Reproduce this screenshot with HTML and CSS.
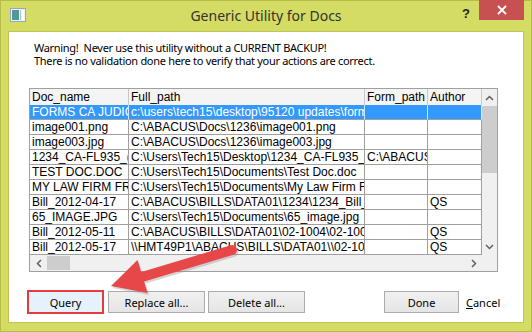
FILE: index.html
```html
<!DOCTYPE html>
<html lang="en">
<head>
    <meta charset="UTF-8">
    <title>Generic Utility for Docs</title>
    <link rel="stylesheet" href="styles.css">
</head>
<body>
    <div class="window">
        <div class="titlebar">
            <div class="title-left">
                <svg class="app-icon" width="16" height="14" viewBox="0 0 16 14">
                    <defs>
                        <linearGradient id="ig" x1="0" y1="0" x2="1" y2="1">
                            <stop offset="0" stop-color="#5a8fb0"/>
                            <stop offset="1" stop-color="#3fa77a"/>
                        </linearGradient>
                    </defs>
                    <rect x="0.5" y="0.5" width="15" height="13" fill="#eef1f6" stroke="#9ca6ba"/>
                    <rect x="2" y="2" width="7" height="10" fill="url(#ig)"/>
                    <rect x="10" y="2" width="1" height="10" fill="#b8c0cc"/>
                    <rect x="12" y="2" width="2" height="10" fill="#ffffff"/>
                </svg>
            </div>
            <div class="title">Generic Utility for Docs</div>
            <div class="title-right">
                <div class="help">?</div>
                <div class="close">
                    <svg width="10" height="10" viewBox="0 0 10 10">
                        <path d="M1 1 L9 9 M9 1 L1 9" stroke="#fff" stroke-width="1.8"/>
                    </svg>
                </div>
            </div>
        </div>

        <div class="client">
            <p class="warning">Warning!&nbsp; Never use this utility without a CURRENT BACKUP!<br>There is no validation done here to verify that your actions are correct.</p>

            <div class="grid">
                <div class="hd">Doc_name</div>
                <div class="hd">Full_path</div>
                <div class="hd">Form_path</div>
                <div class="hd">Author</div>

                <div class="vscroll">
                    <div class="sb-btn">
                        <svg width="9" height="6" viewBox="0 0 9 6"><path d="M1 5 L4.5 1.5 L8 5" fill="none" stroke="#606060" stroke-width="1.5"/></svg>
                    </div>
                    <div class="vtrack"><div class="vthumb"></div></div>
                    <div class="sb-btn">
                        <svg width="9" height="6" viewBox="0 0 9 6"><path d="M1 1 L4.5 4.5 L8 1" fill="none" stroke="#606060" stroke-width="1.5"/></svg>
                    </div>
                </div>

                <div class="cell sel">FORMS CA JUDICIAL</div>
                <div class="cell sel">c:\users\tech15\desktop\95120 updates\forms</div>
                <div class="cell sel"></div>
                <div class="cell sel"></div>

                <div class="cell">image001.png</div>
                <div class="cell">C:\ABACUS\Docs\1236\image001.png</div>
                <div class="cell"></div>
                <div class="cell"></div>

                <div class="cell">image003.jpg</div>
                <div class="cell">C:\ABACUS\Docs\1236\image003.jpg</div>
                <div class="cell"></div>
                <div class="cell"></div>

                <div class="cell">1234_CA-FL935_(2012)</div>
                <div class="cell">C:\Users\Tech15\Desktop\1234_CA-FL935_(2012)</div>
                <div class="cell">C:\ABACUS\Forms</div>
                <div class="cell"></div>

                <div class="cell">TEST DOC.DOC</div>
                <div class="cell">C:\Users\Tech15\Documents\Test Doc.doc</div>
                <div class="cell"></div>
                <div class="cell"></div>

                <div class="cell">MY LAW FIRM FRIENDS</div>
                <div class="cell">C:\Users\Tech15\Documents\My Law Firm Friends</div>
                <div class="cell"></div>
                <div class="cell"></div>

                <div class="cell">Bill_2012-04-17</div>
                <div class="cell">C:\ABACUS\BILLS\DATA01\1234\1234_Bill_2012</div>
                <div class="cell"></div>
                <div class="cell">QS</div>

                <div class="cell">65_IMAGE.JPG</div>
                <div class="cell">C:\Users\Tech15\Documents\65_image.jpg</div>
                <div class="cell"></div>
                <div class="cell"></div>

                <div class="cell">Bill_2012-05-11</div>
                <div class="cell">C:\ABACUS\BILLS\DATA01\02-1004\02-1004</div>
                <div class="cell"></div>
                <div class="cell">QS</div>

                <div class="cell">Bill_2012-05-17</div>
                <div class="cell">\\HMT49P1\ABACUS\BILLS\DATA01\\02-1004</div>
                <div class="cell"></div>
                <div class="cell">QS</div>

                <div class="hscroll">
                    <div class="sb-btn">
                        <svg width="6" height="9" viewBox="0 0 6 9"><path d="M5 1 L1.5 4.5 L5 8" fill="none" stroke="#606060" stroke-width="1.5"/></svg>
                    </div>
                    <div class="htrack"><div class="hthumb"></div></div>
                    <div class="sb-btn">
                        <svg width="6" height="9" viewBox="0 0 6 9"><path d="M1 1 L4.5 4.5 L1 8" fill="none" stroke="#606060" stroke-width="1.5"/></svg>
                    </div>
                </div>
                <div class="corner"></div>
            </div>

            <div class="actions">
                <button class="btn btn-query">Query</button>
                <button class="btn btn-wide btn-replace">Replace all...</button>
                <button class="btn btn-wide btn-delete">Delete all...</button>
                <button class="btn btn-done">Done</button>
                <span class="cancel"><u>C</u>ancel</span>
            </div>
        </div>

        <svg class="arrow" width="532" height="332" viewBox="0 0 532 332">
            <g fill="#8a8a8a" stroke="#8a8a8a" opacity="0.35" transform="translate(1.5 2)">
                <line x1="232" y1="250" x2="142" y2="277" stroke-width="10" stroke-linecap="round"/>
                <polygon points="111,286 137.5,260 147.5,293" stroke="none"/>
            </g>
            <g fill="#e8474a" stroke="#e8474a">
                <line x1="232" y1="250" x2="142" y2="277" stroke-width="10" stroke-linecap="round"/>
                <polygon points="111,286 137.5,260 147.5,293" stroke="none"/>
            </g>
        </svg>
    </div>
</body>
</html>
```

FILE: styles.css
```css
* {
    margin: 0;
    padding: 0;
    box-sizing: border-box;
}

body {
    background: #ffffff;
}

.window {
    position: relative;
    width: 532px;
    height: 332px;
    background: #d5dc64;
    border: 1px solid #b5bc48;
    display: flex;
    flex-direction: column;
    font-family: "Noto Sans", "Open Sans", sans-serif;
}

/* title bar */
.titlebar {
    height: 30px;
    display: grid;
    grid-template-columns: 1fr auto 1fr;
}

.title-left {
    padding: 7px 0 0 9px;
}

.app-icon {
    display: block;
}

.title {
    font-size: 14px;
    line-height: 30px;
    color: #333333;
}

.title-right {
    display: flex;
    justify-content: flex-end;
    align-items: flex-start;
    padding-right: 7px;
}

.help {
    font-family: "Liberation Sans", sans-serif;
    font-weight: bold;
    font-size: 13px;
    color: #222222;
    margin: 5px 9px 0 0;
}

.close {
    width: 45px;
    height: 20px;
    margin-top: -1px;
    background: #c75050;
    display: flex;
    align-items: center;
    justify-content: center;
}

/* client area */
.client {
    flex: 1;
    margin: 0 7px 8px 7px;
    background: #ffffff;
    border: 1px solid #bfc55a;
}

.warning {
    margin: 9px 0 0 25px;
    font-size: 11px;
    line-height: 13px;
    letter-spacing: -0.3px;
    color: #000000;
}

/* data grid */
.grid {
    margin: 21px 0 0 20px;
    width: 469px;
    border: 1px solid #a0a0a0;
    display: grid;
    grid-template-columns: 99px 236px 63px 54px 15px;
    grid-template-rows: 16px repeat(10, 15px) 16px;
    font-family: "Liberation Sans", Arial, sans-serif;
    font-size: 12px;
}

.hd {
    background: #f4f4f4;
    border-right: 1px solid #c8c8c8;
    padding-left: 2px;
    line-height: 16px;
    white-space: nowrap;
    overflow: hidden;
    color: #000000;
}

.cell {
    border-right: 1px solid #a0a0a0;
    border-bottom: 1px solid #a0a0a0;
    padding-left: 2px;
    line-height: 14px;
    white-space: nowrap;
    overflow: hidden;
    color: #000000;
}

.cell.sel {
    background: #3399ff;
    color: #ffffff;
    border-right-color: #cfe6ff;
}

.vscroll {
    grid-column: 5;
    grid-row: 1 / 12;
    background: #f0f0f0;
    display: flex;
    flex-direction: column;
}

.sb-btn {
    flex: 0 0 17px;
    display: flex;
    align-items: center;
    justify-content: center;
}

.vtrack {
    flex: 1;
}

.vthumb {
    height: 67px;
    background: #cdcdcd;
}

.hscroll {
    grid-column: 1 / 5;
    grid-row: 12;
    background: #f0f0f0;
    display: flex;
}

.htrack {
    flex: 1;
    padding: 1px 0;
}

.hthumb {
    width: 23px;
    height: 100%;
    background: #cdcdcd;
}

.corner {
    grid-column: 5;
    grid-row: 12;
    background: #f0f0f0;
}

/* buttons */
.actions {
    margin: 19px 0 0 19px;
    display: flex;
    align-items: center;
}

.btn {
    height: 22px;
    width: 75px;
    font-family: "Noto Sans", "Open Sans", sans-serif;
    font-size: 11px;
    color: #000000;
    background: linear-gradient(#f0f0f0, #e5e5e5);
    border: 1px solid #acacac;
}

.btn-query {
    background: #e5f1fb;
    border-color: #3c7fb1;
    outline: 2px solid #e53b3b;
    outline-offset: -1px;
}

.btn-wide {
    width: 97px;
}

.btn-replace {
    margin-left: 5px;
}

.btn-delete {
    margin-left: 3px;
}

.btn-done {
    margin-left: 79px;
}

.cancel {
    margin-left: 7px;
    font-size: 11px;
    color: #000000;
}

.arrow {
    position: absolute;
    left: -1px;
    top: -1px;
    pointer-events: none;
}
```
